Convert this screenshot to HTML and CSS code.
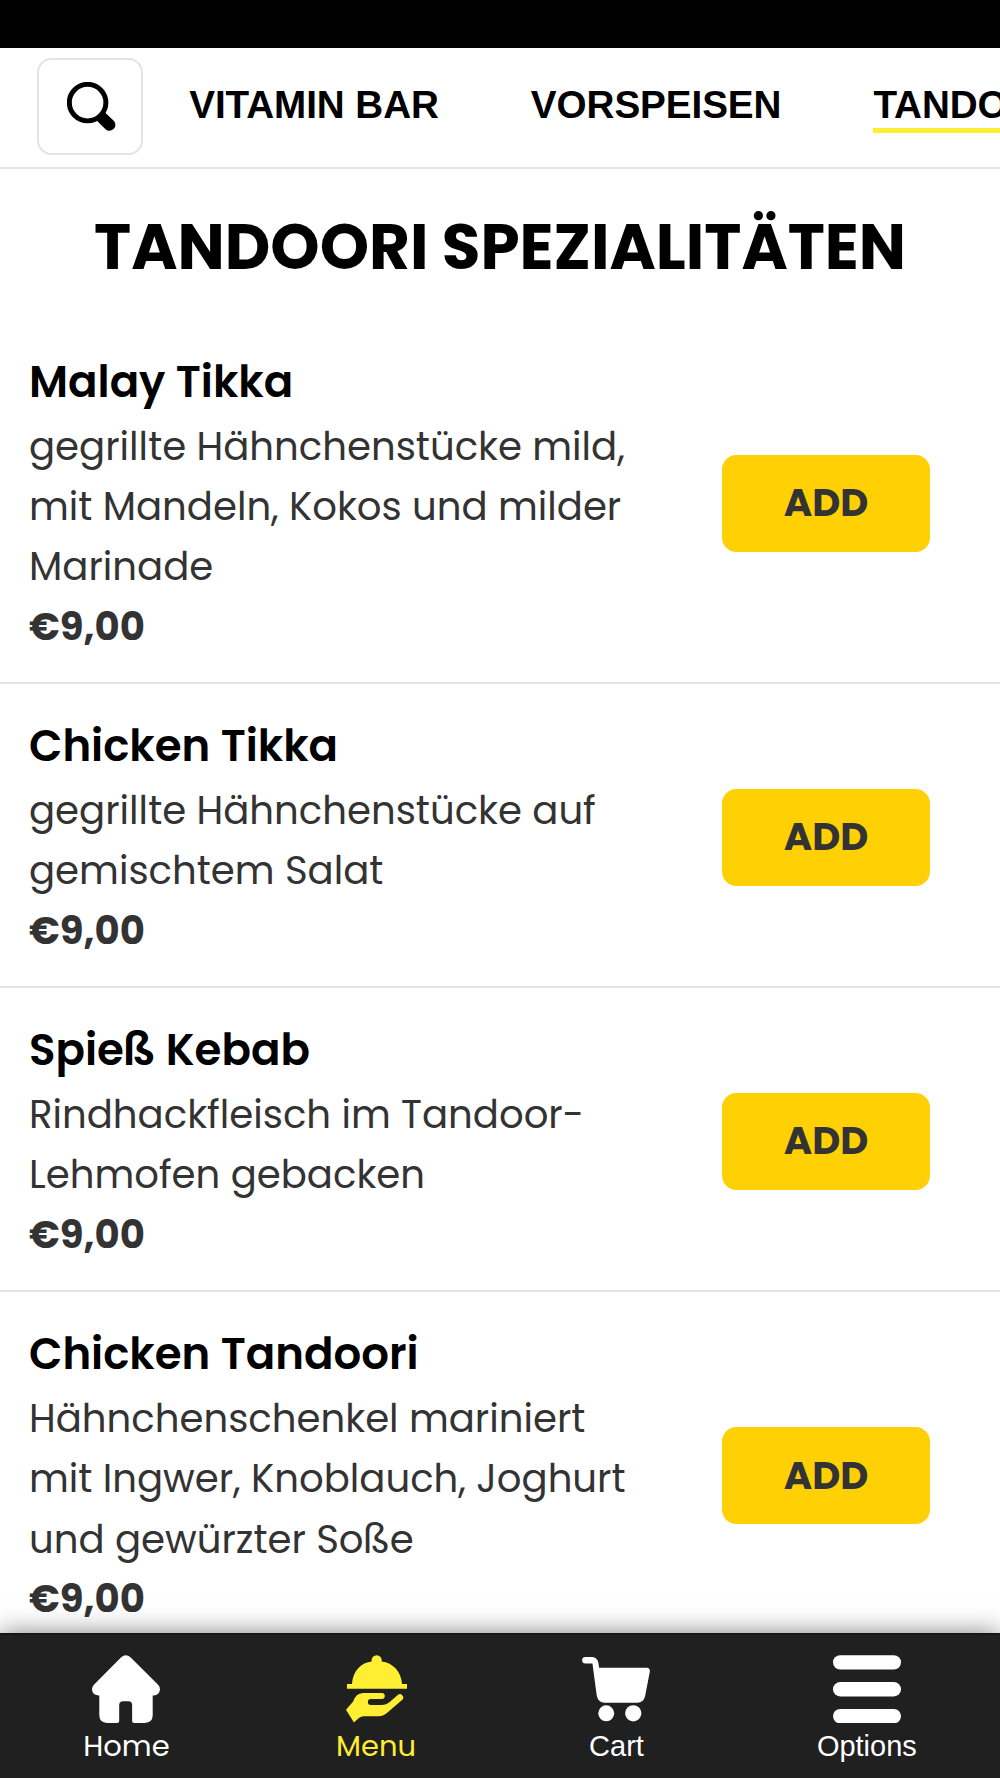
FILE: index.html
```html
<!DOCTYPE html>
<html lang="de">
<head>
<meta charset="utf-8">
<title>Tandoori Spezialitäten</title>
<link rel="stylesheet" href="styles.css">
</head>
<body>
<div class="status-bar"></div>
<header class="topbar">
  <button class="search" aria-label="Suche">
    <svg class="search-icon" viewBox="203 155 146 146"><circle cx="265" cy="217" r="55" fill="none" stroke="currentColor" stroke-width="15"/><path d="M318 245 Q319 249 323 252 L343 271 A17.500 17.500 0 0 1 319 297 L299 278 Q296 274 292 271Z" fill="currentColor"/></svg>
  </button>
  <nav class="tabs">
    <a class="tab">VITAMIN BAR</a>
    <a class="tab">VORSPEISEN</a>
    <a class="tab tab-active">TANDOORI SPEZIALITÄTEN</a>
  </nav>
</header>
<main class="content">
  <h1 class="title">TANDOORI SPEZIALITÄTEN</h1>
  <article class="item">
    <div class="info">
      <h2 class="name">Malay Tikka</h2>
      <p class="desc">gegrillte Hähnchenstücke mild,<br>mit Mandeln, Kokos und milder<br>Marinade</p>
      <p class="price">€9,00</p>
    </div>
    <button class="add">ADD</button>
  </article>
  <article class="item">
    <div class="info">
      <h2 class="name">Chicken Tikka</h2>
      <p class="desc">gegrillte Hähnchenstücke auf<br>gemischtem Salat</p>
      <p class="price">€9,00</p>
    </div>
    <button class="add">ADD</button>
  </article>
  <article class="item">
    <div class="info">
      <h2 class="name">Spieß Kebab</h2>
      <p class="desc">Rindhackfleisch im Tandoor-<br>Lehmofen gebacken</p>
      <p class="price">€9,00</p>
    </div>
    <button class="add">ADD</button>
  </article>
  <article class="item">
    <div class="info">
      <h2 class="name">Chicken Tandoori</h2>
      <p class="desc">Hähnchenschenkel mariniert<br>mit Ingwer, Knoblauch, Joghurt<br>und gewürzter Soße</p>
      <p class="price">€9,00</p>
    </div>
    <button class="add">ADD</button>
  </article>
</main>
<nav class="bottom-nav">
  <a class="nav-item">
    <svg class="nav-icon" viewBox="275 103 205 205"><path fill="currentColor" d="M363 109 Q377 97 391 109 L475 193 Q480 198 480 206 Q478 223 461 224 H458 V285 Q457 307 434 307 H402 Q396 307 396 301 V254 Q396 242 385 242 H369 Q357 242 357 254 V301 Q357 307 351 307 H320 Q298 307 297 285 V224 H294 Q276 222 275 206 Q275 198 280 193Z"/></svg>
    <span class="nav-label">Home</span>
  </a>
  <a class="nav-item nav-active">
    <svg class="nav-icon" viewBox="1027 103 205 205"><g fill="currentColor"><circle cx="1131.500" cy="118.500" r="15.500"/><path d="M1057 190 C1060 150 1085 125 1117 122 H1147 C1180 126 1206 152 1208 190 H1223 V204 H1042 V190Z"/><path d="M1039 267 L1060 243 Q1069 218 1090 217 H1147 A9 9 0 0 1 1147 235 H1114 A9 9 0 0 0 1114 253 H1148 Q1161 253 1170 245 L1195 223 A9.500 9.500 0 0 1 1208 238 L1165 275 Q1152 287 1138 287 H1092 Q1084 287 1078 292 L1063 306Z"/></g></svg>
    <span class="nav-label">Menu</span>
  </a>
  <a class="nav-item">
    <svg class="nav-icon" viewBox="245.500 103 205 205"><g fill="currentColor"><path d="M256 108 H276 Q292 109 295 126 L297 141 H441 Q451 142 450 152 L436 225 Q432 245 412 246 H314 Q294 245 290 225 L277 128 H256 A10 10 0 0 1 256 108Z"/><circle cx="318.500" cy="278" r="24"/><circle cx="400" cy="278" r="24.500"/></g></svg>
    <span class="nav-label nav-label-plain">Cart</span>
  </a>
  <a class="nav-item">
    <svg class="nav-icon" viewBox="0 0 205 205"><g fill="currentColor"><rect width="205" height="43" rx="21.500"/><rect y="81" width="205" height="43" rx="21.500"/><rect y="162" width="205" height="43" rx="21.500"/></g></svg>
    <span class="nav-label nav-label-plain">Options</span>
  </a>
</nav>
</body>
</html>
```
FILE: styles.css
```css
* { box-sizing: border-box; }

body {
  display: flex;
  flex-direction: column;
  width: 1000px;
  height: 1778px;
  margin: 0;
  overflow: hidden;
  background: #fff;
  color: #000;
  font-family: Poppins, Inter, sans-serif;
}

.status-bar {
  flex: none;
  height: 48.300px;
  background: #000;
}

.topbar {
  flex: none;
  display: flex;
  align-items: flex-start;
  height: 120.700px;
  padding: 9.700px 0 0 36.500px;
  border-bottom: 2px solid #e4e4e4;
  overflow: hidden;
}

.search {
  flex: none;
  display: flex;
  align-items: center;
  justify-content: center;
  width: 106px;
  height: 97px;
  padding: 0 0 0 4px;
  border: 2px solid #e4e4e4;
  border-radius: 14.500px;
  background: #fff;
  color: #000;
}

.search-icon { width: 48.500px; height: 48.500px; }

.tabs {
  display: flex;
  gap: 92px;
  margin: 24.600px 0 0 46.700px;
}

.tab {
  flex: none;
  border-bottom: 5px solid transparent;
  padding-bottom: 1px;
  font: bold 38.650px/44.400px "Liberation Sans", Arial, sans-serif;
  letter-spacing: -.070px;
  white-space: nowrap;
}

.tab-active { border-color: #ffee32; }

.content {
  flex: 1;
  min-height: 0;
  overflow: hidden;
}

.title {
  height: 150.300px;
  margin: 0;
  padding-top: 33px;
  font-size: 62.800px;
  font-weight: 700;
  line-height: 90px;
  text-align: center;
  white-space: nowrap;
}

.item {
  display: flex;
  align-items: center;
  justify-content: space-between;
  padding: 32.600px 70px 24.500px 29px;
  border-bottom: 2px solid #e4e4e4;
}

.name {
  margin: 0 0 4.300px;
  font-size: 43.480px;
  font-weight: 600;
  line-height: 60.400px;
}

.desc, .price {
  margin: 0;
  color: #333;
  font-size: 38.650px;
  line-height: 60.400px;
  white-space: nowrap;
}

.price {
  margin-top: -1px;
  font-weight: 700;
}

.add {
  width: 208px;
  height: 97px;
  margin-bottom: 2.600px;
  padding: 0;
  border: 0;
  border-radius: 14.500px;
  background: #ffd105;
  color: #333;
  font: 700 38.650px/58px Poppins, Inter, sans-serif;
}

.bottom-nav {
  position: relative;
  z-index: 1;
  flex: none;
  display: flex;
  justify-content: space-around;
  height: 145px;
  padding-top: 19.500px;
  border-top: 2px solid #171717;
  background: #202020;
  box-shadow: 0 0 24px rgba(0, 0, 0, .5);
  color: #fff;
}

.nav-item {
  display: flex;
  flex-direction: column;
  align-items: center;
}

.nav-active { color: #ffee32; }

.nav-icon { width: 68px; height: 68.500px; }

.nav-label {
  margin-top: 2px;
  font-size: 28.980px;
  line-height: 43.500px;
}

.nav-label-plain { font-family: "Liberation Sans", Arial, sans-serif; }
```
